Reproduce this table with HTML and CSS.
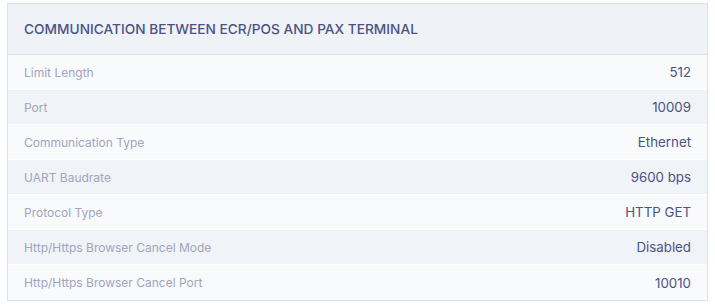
FILE: index.html
```html
<!DOCTYPE html>
<html>
<head>
<meta charset="utf-8">
<link rel="stylesheet" href="styles.css">
</head>
<body>
<div class="card">
  <div class="card-header">COMMUNICATION BETWEEN ECR/POS AND PAX TERMINAL</div>
  <div class="rows">
    <div class="row"><span class="label">Limit Length</span><span class="value">512</span></div>
    <div class="row"><span class="label">Port</span><span class="value">10009</span></div>
    <div class="row"><span class="label">Communication Type</span><span class="value">Ethernet</span></div>
    <div class="row"><span class="label">UART Baudrate</span><span class="value">9600 bps</span></div>
    <div class="row"><span class="label">Protocol Type</span><span class="value">HTTP GET</span></div>
    <div class="row"><span class="label">Http/Https Browser Cancel Mode</span><span class="value">Disabled</span></div>
    <div class="row"><span class="label">Http/Https Browser Cancel Port</span><span class="value">10010</span></div>
  </div>
</div>
</body>
</html>
```
FILE: styles.css
```css
html, body {
  margin: 0;
  padding: 0;
  background: #ffffff;
}
body {
  padding: 3px 7px 0 7px;
  font-family: Inter, "Noto Sans", sans-serif;
}
.card {
  width: 699px;
  border: 1px solid #d9e2ec;
  background: #f8fafc;
}
.card-header {
  height: 50px;
  display: flex;
  align-items: center;
  padding-left: 16px;
  background: #eff2f6;
  border-bottom: 1px solid #d9e2ec;
  color: #4d5281;
  font-size: 13.7px;
  font-weight: 500;
}
.row {
  height: 34px;
  display: flex;
  align-items: center;
  justify-content: space-between;
  padding: 0 16px;
  border-bottom: 1px solid #ffffff;
}
.row:last-child {
  border-bottom: none;
  height: 35px;
}
.row:nth-child(even) {
  background: #f0f3f7;
}
.label {
  font-size: 12px;
  color: #a2a5bb;
}
.value {
  font-size: 13.3px;
  color: #4d5281;
}
```
